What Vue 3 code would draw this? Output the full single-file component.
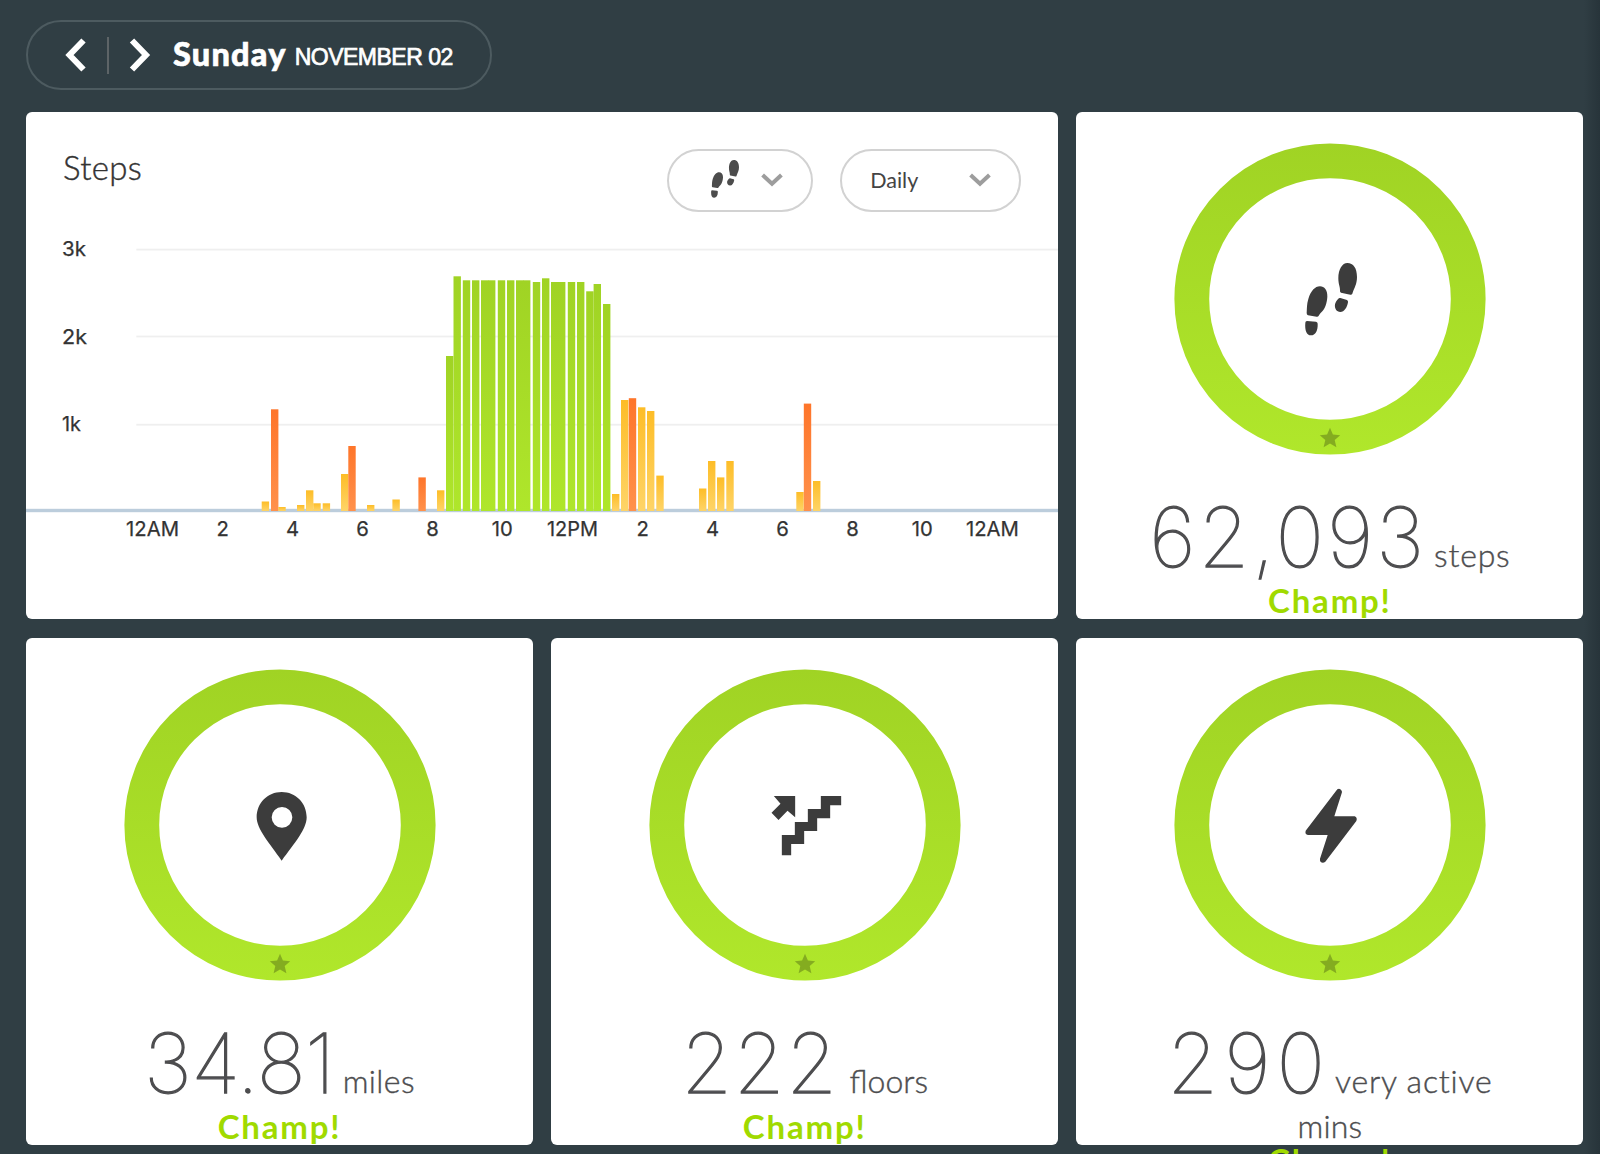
<script setup>
const feet =
  'M127 0C145 0 156 15 156 42C156 64 148 74 142 92Q140 96 136 95L108 89Q104 88 105 82C105 70 100 64 100 46C100 18 112 0 127 0Z' +
  'M106 105L126 111Q130 113 129 118C126 134 118 147 106 147C95 147 88 137 90 124C92 117 95 112 100 107Q102 104 106 105Z' +
  'M45 70C58 70 68 81 67 101C66 122 59 137 52 145C45 151 43 156 40 160Q38 162 35 161L9 157Q5 156 5 150C6 136 5 124 10 108C17 84 30 70 45 70Z' +
  'M6 174L33 176Q38 177 38 182C39 203 31 217 18 217C5 217 -1 203 1 179Q1 174 6 174Z'
const pin =
  'M75 0C117 0 150 33 150 76C150 111 114 153 75 206C38 153 0 111 0 76C0 33 33 0 75 0ZM76 45A31 31 0 1 0 76 107A31 31 0 1 0 76 45Z'
const stairs =
  'M148 0H209V28H176V67H137V105H98V144H59V178H31V117H70V78H109V39H148ZM7 0H71V64L48 44L21 72L0 50L27 23Z'
const bolt =
  'M97 2Q104 -3 110 6Q112 9 110 14L88 83H149Q158 87 154 97L61 219Q54 225 47 220Q44 216 45 210L68 139H9Q-1 137 2 126Z'

const metrics = [
  { id: 'distance', value: '34.81', unit: 'miles', icon: pin, x: -70, y: -99 },
  { id: 'floors', value: '222', unit: 'floors', icon: stairs, x: -100.5, y: -87 },
  { id: 'active', value: '290', unit: 'very active', more: 'mins', icon: bolt, x: -75, y: -109 },
]
const tiles = [
  { id: 'steps', value: '62,093', unit: 'steps', icon: feet, x: -75, y: -108 },
  ...metrics,
]

// [left, top, colour]: positions inside the plot area
const bars = [
  [261.7, 501.5, 'y'], [271, 409.3, 'o'], [278.3, 507, 'y'], [297, 505, 'y'], [306, 490.3, 'y'],
  [313.3, 503.3, 'y'], [322.7, 503.3, 'y'], [341, 474, 'y'], [348.3, 446, 'o'], [367, 505, 'y'],
  [392.4, 499.5, 'y'], [418.4, 477.4, 'o'], [437, 490.3, 'y'], [446, 356, 'g'], [453.5, 276.3, 'g'],
  [462.8, 280.3, 'g'], [472, 280.3, 'g'], [481, 280.3, 'g'], [488, 280.3, 'g'], [497.8, 280.3, 'g'],
  [507, 280.3, 'g'], [516, 280.3, 'g'], [523, 280.3, 'g'], [532.8, 282, 'g'], [542, 278.3, 'g'],
  [551, 282, 'g'], [558, 282, 'g'], [567.8, 282, 'g'], [577, 282, 'g'], [586.2, 291.3, 'g'],
  [593.6, 284, 'g'], [603, 304, 'g'], [612, 494, 'y'], [621, 400, 'y'], [628.8, 398.2, 'o'],
  [638, 407.3, 'y'], [647, 411, 'y'], [656.3, 475.6, 'y'], [699, 488.5, 'y'], [708, 461, 'y'],
  [717, 477.4, 'y'], [726.3, 461, 'y'], [796.3, 492, 'y'], [803.8, 403.6, 'o'], [813, 481, 'y'],
]
const ticks = [
  [152.6, '12AM', 53], [222.6, '2'], [292.6, '4'], [362.6, '6'], [432.6, '8'], [502.2, '10', 21],
  [572.4, '12PM', 51], [642.6, '2'], [712.6, '4'], [782.6, '6'], [852.6, '8'], [922.2, '10', 21],
  [992.4, '12AM', 53],
]
const rows = [
  [249.7, 256.3, '3k', 24],
  [336.6, 343.5, '2k', 25],
  [424.8, 430.5, '1k', 19],
]
</script>

<template>
  <main class="page">
    <nav class="datebar">
      <svg class="arrow" width="22" height="34" viewBox="0 0 22 34"><path d="M18.5 2.5L4.5 17L18.5 31.5" /></svg>
      <span class="rule"></span>
      <svg class="arrow" width="22" height="34" viewBox="0 0 22 34"><path d="M3 2.5L17 17L3 31.5" /></svg>
      <b class="day">Sunday</b>
      <span class="date">NOVEMBER 02</span>
    </nav>

    <div class="grid">
      <section class="tile wide">
        <header class="head">
          <h2>Steps</h2>
          <div class="select kind">
            <svg width="28" height="38" viewBox="0 0 156 218" preserveAspectRatio="none"><path :d="feet" fill="#4c4c4c" /></svg>
            <svg class="chev" width="22" height="14" viewBox="0 0 22 14"><path d="M1.6 2L11 10.8L20.4 2" /></svg>
          </div>
          <div class="select period">
            <span>Daily</span>
            <svg class="chev" width="22" height="14" viewBox="0 0 22 14"><path d="M1.6 2L11 10.8L20.4 2" /></svg>
          </div>
        </header>
        <svg class="chart" width="1032" height="320" viewBox="26 235 1032 320">
          <defs>
            <linearGradient id="g" x2="0" y2="1"><stop stop-color="#a0d324" /><stop offset="1" stop-color="#afe62b" /></linearGradient>
            <linearGradient id="y" x2="0" y2="1"><stop stop-color="#fdbd27" /><stop offset="1" stop-color="#fed468" /></linearGradient>
            <linearGradient id="o" x2="0" y2="1"><stop stop-color="#fe752a" /><stop offset="1" stop-color="#ff914c" /></linearGradient>
          </defs>
          <g v-for="r in rows" :key="r[2]">
            <rect x="136.3" :y="r[0] - 1" width="922" height="1.8" fill="#efefef" />
            <text x="62" :y="r[1]" :textLength="r[3]" lengthAdjust="spacingAndGlyphs">{{ r[2] }}</text>
          </g>
          <rect x="26" y="508.8" width="1032" height="3.4" fill="#bccddc" />
          <rect v-for="b in bars" :key="b[0]" :x="b[0]" :y="b[1]" width="7.4" :height="511 - b[1]" :fill="`url(#${b[2]})`" />
          <text
            v-for="t in ticks" :key="t[0]" :x="t[0]" y="536" text-anchor="middle"
            :textLength="t[2]" lengthAdjust="spacingAndGlyphs"
          >{{ t[1] }}</text>
        </svg>
      </section>

      <section v-for="m in tiles" :key="m.id" class="tile" :class="m.id">
        <svg class="ring" width="312" height="312" viewBox="-156 -156 312 312">
          <defs>
            <linearGradient :id="'r-' + m.id" gradientUnits="userSpaceOnUse" x1="0" y1="-156" x2="0" y2="156">
              <stop stop-color="#a0d324" /><stop offset="1" stop-color="#b0e72b" />
            </linearGradient>
          </defs>
          <circle r="138.2" fill="none" stroke-width="34.8" :stroke="`url(#r-${m.id})`" />
          <g transform="scale(.33333)">
            <path :d="m.icon" fill="#3c3c3c" fill-rule="evenodd" :transform="`translate(${m.x} ${m.y})`" />
          </g>
          <path
            d="M0 -10.4L2.9 -3.7L10.2 -3L4.7 1.8L6.4 9L0 5.2L-6.4 9L-4.7 1.8L-10.2 -3L-2.9 -3.7Z"
            transform="translate(0 139.2)" fill="#84ac20"
          />
        </svg>
        <div class="reading">
          <span class="num">{{ m.value }}</span>
          <span class="unit">{{ m.unit }}</span>
        </div>
        <div v-if="m.more" class="unit more">{{ m.more }}</div>
        <div class="cheer">Champ!</div>
      </section>
    </div>
  </main>
</template>

<style>
body {
  margin: 0;
  background: #303e44;
}
</style>

<style scoped>
.page {
  box-sizing: border-box;
  width: 1600px;
  height: 1154px;
  overflow: hidden;
  padding: 20px 0 0 26px;
  background: linear-gradient(90deg, #303e44 1584px, #27343a 1600px);
  font-family: Lato, "Liberation Sans", sans-serif;
  color: #4d4d4f;
}
.datebar {
  box-sizing: border-box;
  width: 466px;
  height: 70px;
  border: 2px solid #4d5b60;
  border-radius: 35px;
  display: flex;
  align-items: center;
  padding-left: 37px;
  color: #fff;
}
.arrow {
  margin-top: -1px;
}
.arrow path {
  fill: none;
  stroke: #fff;
  stroke-width: 6;
}
.rule {
  width: 2px;
  height: 37px;
  margin: 0 20px;
  background: #5d6467;
}
.day {
  margin: -2px 0 0 22px;
  font: 900 32.5px/40px Lato, sans-serif;
  letter-spacing: 1.2px;
  -webkit-text-stroke: 0.6px #fff;
}
.date {
  margin: 4px 0 0 8px;
  font: 23px/40px "Liberation Sans", sans-serif;
  letter-spacing: -0.5px;
  -webkit-text-stroke: 0.7px #fff;
  white-space: nowrap;
}
.grid {
  margin-top: 22.3px;
  display: grid;
  grid-template-columns: repeat(3, 507px);
  grid-auto-rows: 507px;
  gap: 18.4px 18.2px;
}
.tile {
  border-radius: 6px;
  background: #fff;
  display: flex;
  flex-direction: column;
  align-items: center;
  min-width: 0;
}
.wide {
  grid-column: span 2;
  align-items: stretch;
}
.head {
  display: flex;
  height: 122.7px;
  padding: 0 37px 0 37px;
}
h2 {
  margin: 35px auto 0 0;
  font-size: 33px;
  line-height: 40px;
  font-weight: 300;
  letter-spacing: 0.3px;
  color: #333;
  -webkit-text-stroke: 0.4px #333;
}
.select {
  box-sizing: border-box;
  height: 62.5px;
  margin-top: 37px;
  border: 2px solid #d2d2d2;
  border-radius: 32px;
  display: flex;
  align-items: center;
  justify-content: space-between;
}
.kind {
  width: 146px;
  padding: 0 28px 4px 42px;
}
.kind .chev {
  margin-top: 3px;
}
.period {
  width: 181px;
  margin-left: 27px;
  padding: 0 28px 1px;
  font-size: 21.5px;
  color: #444;
}
.chev path {
  fill: none;
  stroke: #9d9d9d;
  stroke-width: 4;
}
.chart {
  display: block;
}
.chart text {
  font-family: Inter, sans-serif;
  font-size: 20.3px;
  fill: #333;
  stroke: #333;
  stroke-width: 0.25px;
}
.ring {
  display: block;
  margin-top: 31px;
  flex: none;
}
.reading {
  display: flex;
  align-items: baseline;
  height: 95px;
  margin-top: 33px;
  line-height: 100px;
  white-space: nowrap;
}
.num {
  font-family: Inter, sans-serif;
  font-size: 82px;
  font-weight: 100;
  letter-spacing: 3px;
  -webkit-text-stroke: 1.3px #4d4d4f;
}
.distance .num {
  letter-spacing: -0.5px;
}
.floors .num {
  letter-spacing: 1.5px;
}
.active .num {
  letter-spacing: 6px;
}
.unit {
  margin-left: 7px;
  font-size: 32px;
  font-weight: 300;
  letter-spacing: 0.8px;
  -webkit-text-stroke: 0.4px #4d4d4f;
}
.distance .unit {
  margin-left: 8px;
  letter-spacing: 0.4px;
}
.floors .unit {
  margin-left: 11px;
  letter-spacing: 0;
}
.active .unit {
  margin-left: 4px;
}
.active .more {
  margin: 0;
  height: 34px;
  line-height: 34px;
  letter-spacing: 0.2px;
}
.cheer {
  height: 34px;
  line-height: 34px;
  font-size: 33px;
  font-weight: 700;
  letter-spacing: 1.8px;
  color: #a0da00;
}
</style>
